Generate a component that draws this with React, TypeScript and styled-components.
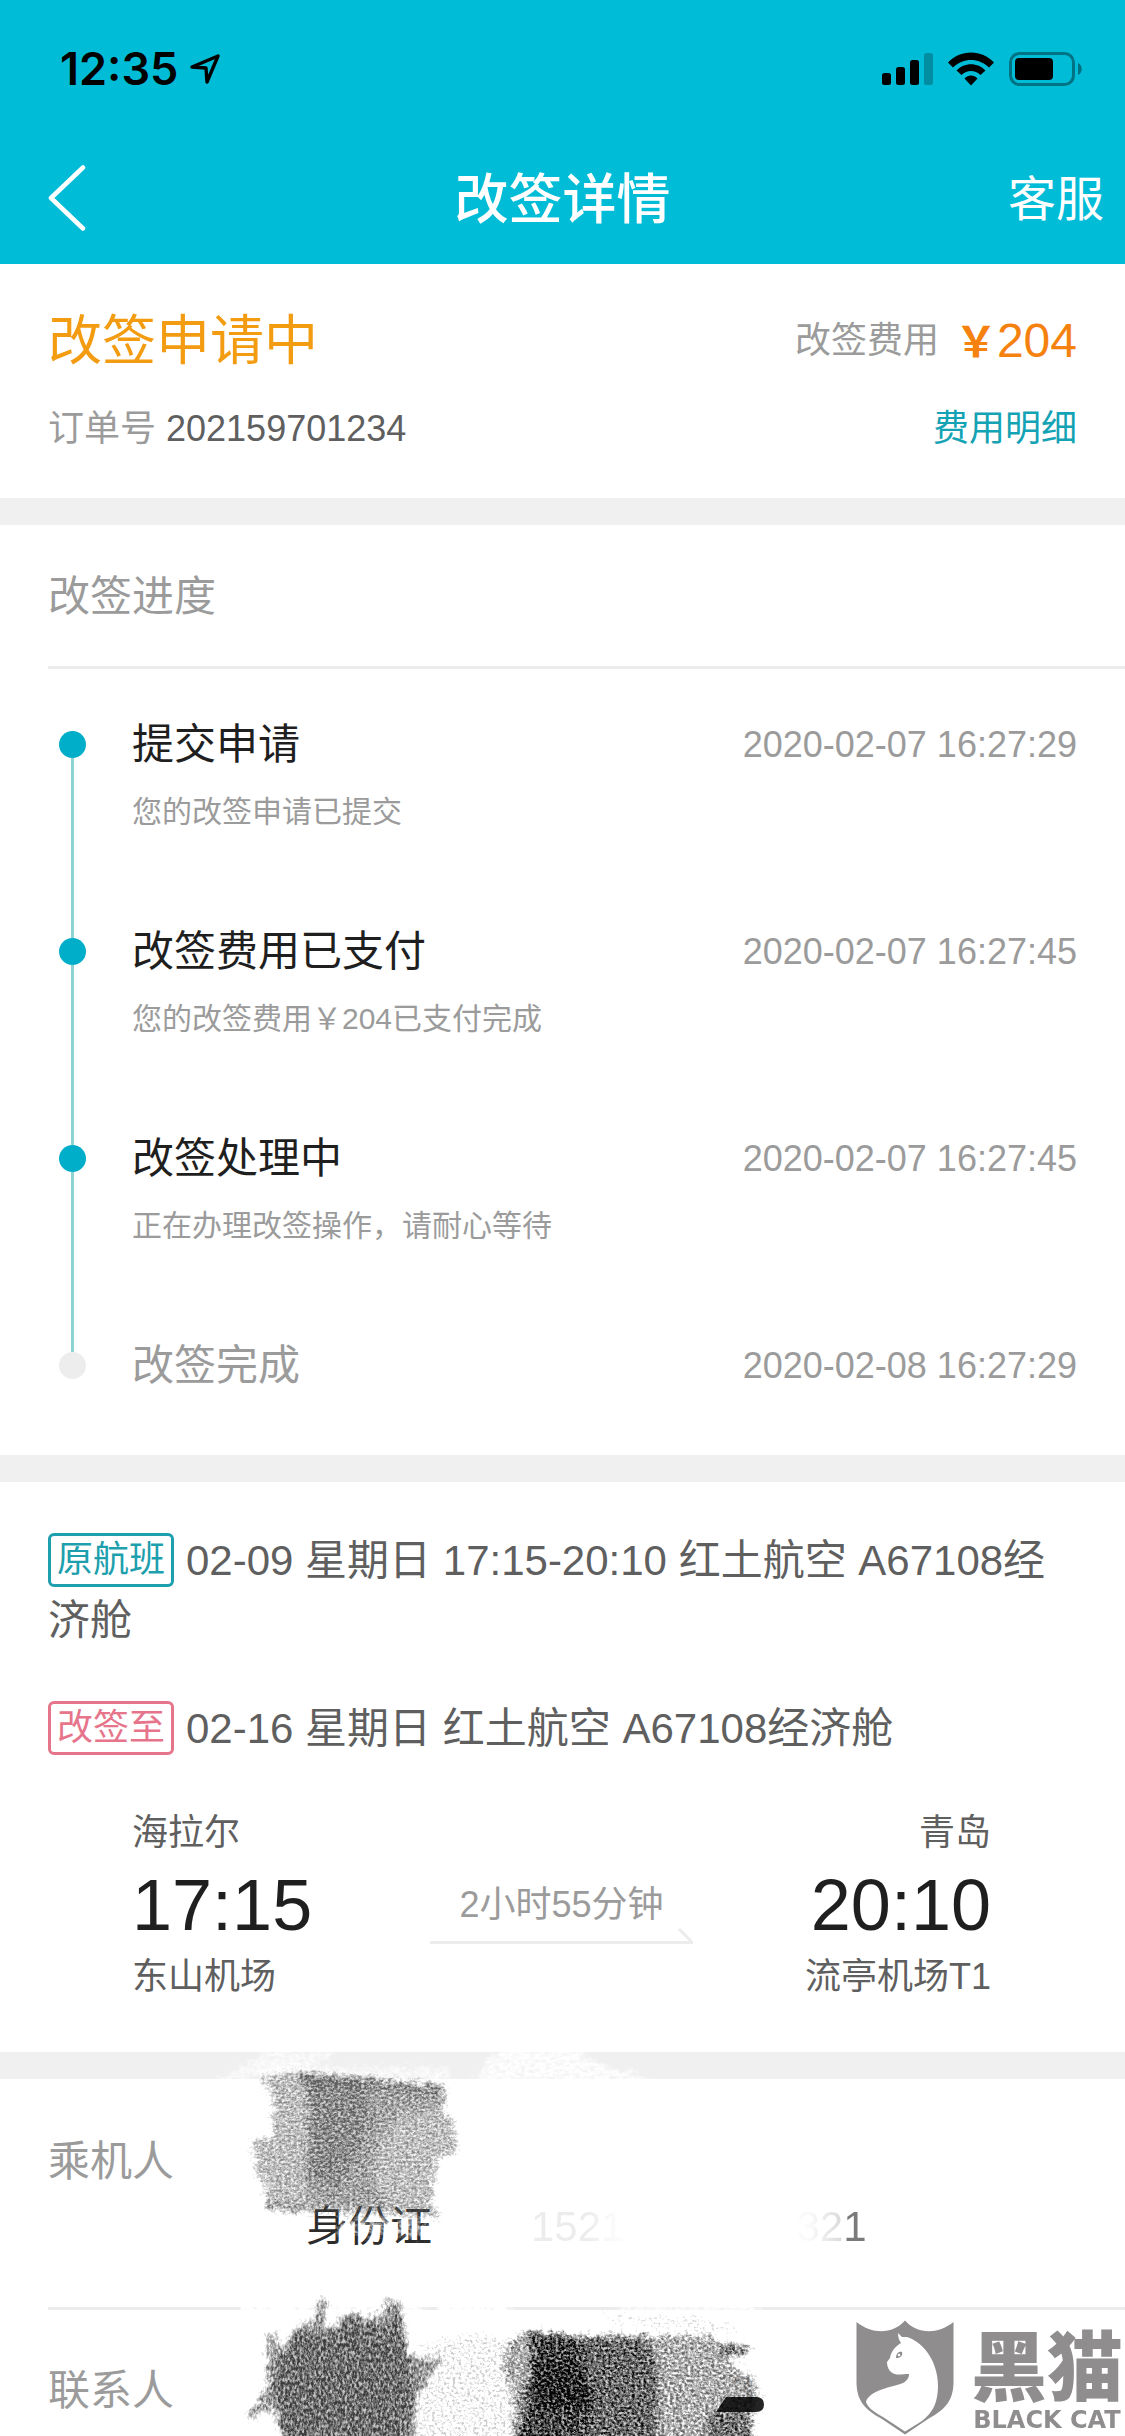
import React from "react";
import styled, { createGlobalStyle } from "styled-components";

const GlobalStyle = createGlobalStyle`
  *, *::before, *::after { box-sizing: border-box; }
  html, body { margin: 0; padding: 0; }
  body {
    background: #fff;
    color: #5f5f5f;
    font-family: "Liberation Sans", "Noto Sans CJK SC", sans-serif;
    font-size: 36px;
    line-height: 60px;
    overflow-x: hidden;
  }
  p, h1, h2, ol, dl, dd, dt { margin: 0; padding: 0; font: inherit; }
  button { border: 0; background: none; padding: 0; font: inherit; color: inherit; cursor: pointer; }
`;

const Page = styled.div`
  position: relative;
  display: flex;
  flex-direction: column;
  min-height: 100vh;
  overflow: hidden;
`;

const Header = styled.header`
  background: #00bcd7;
  color: #fff;
`;

const StatusBar = styled.div`
  display: flex;
  align-items: center;
  justify-content: space-between;
  height: 132px;
  padding: 6px 42px 0 60px;
  color: #000;
`;

const Clock = styled.div`
  display: flex;
  align-items: center;
  gap: 12px;
  font-family: Inter, sans-serif;
  font-size: 45px;
  font-weight: 600;
`;

const StatusIcons = styled.div`
  display: flex;
  align-items: center;
  gap: 15px;
`;

const NavBar = styled.nav`
  display: grid;
  grid-template-columns: 1fr auto 1fr;
  align-items: center;
  height: 132px;
`;

const BackButton = styled.button`
  display: flex;
  justify-self: start;
  margin-left: 48px;
`;

const NavTitle = styled.h1`
  padding-top: 4px;
  font-size: 54px;
  font-weight: 500;
`;

const ServiceButton = styled.button`
  justify-self: end;
  padding-top: 4px;
  margin-right: 21px;
  font-size: 48px;
`;

const Section = styled.section`
  border-bottom: 27px solid #f0f0f0;
`;

const Summary = styled(Section)`
  display: flex;
  flex-direction: column;
  gap: 28px;
  padding: 47px 48px 39px;
`;

const SummaryRow = styled.div`
  display: flex;
  align-items: center;
  justify-content: space-between;
`;

const StatusTitle = styled.h2`
  font-size: 54px;
  color: #f39c12;
`;

const Muted = styled.span`
  color: #9b9b9b;
`;

const Fee = styled.p`
  display: flex;
  align-items: center;
  gap: 16px;
`;

const Price = styled.strong`
  display: flex;
  align-items: baseline;
  height: 60px;
  font-size: 48px;
  font-weight: 400;
  color: #f5820f;
`;

const Yen = styled.span`
  font-size: 42px;
  font-weight: 700;
  line-height: 42px;
`;

const DetailLink = styled.a`
  color: #14a3b4;
  text-decoration: none;
`;

const SectionTitle = styled.h2`
  display: flex;
  align-items: center;
  min-height: 144px;
  margin-left: 48px;
  padding-top: 2px;
  border-bottom: 3px solid #ececec;
  font-size: 42px;
  color: #9b9b9b;
`;

const Steps = styled.ol`
  list-style: none;
  padding: 46px 48px 59px 59px;
`;

const Step = styled.li`
  display: grid;
  grid-template-columns: 27px 1fr auto;
  column-gap: 46px;
`;

const Marker = styled.div`
  display: flex;
  flex-direction: column;
  align-items: center;
  padding-top: 16px;
`;

const Dot = styled.i<{ $done: boolean }>`
  flex: none;
  width: 27px;
  height: 27px;
  border-radius: 50%;
  background: ${(p) => (p.$done ? "#00aec9" : "#ededed")};
`;

const Rail = styled.i`
  flex: 1;
  width: 3px;
  margin-bottom: -16px;
  background: #8dd3d3;
`;

const StepBody = styled.div<{ $last: boolean }>`
  padding-bottom: ${(p) => (p.$last ? "0" : "89px")};
`;

const StepTitle = styled.p<{ $done: boolean }>`
  font-size: 42px;
  color: ${(p) => (p.$done ? "#1f1f1f" : "#9b9b9b")};
`;

const StepNote = styled.p`
  margin-top: 16px;
  font-size: 30px;
  line-height: 42px;
  color: #9b9b9b;
`;

const StepTime = styled.time`
  color: #9b9b9b;
`;

const Flights = styled(Section)`
  padding: 49px 48px 39px;
`;

const FlightLine = styled.p`
  font-size: 42px;
  & + & { margin-top: 48px; }
`;

const Tag = styled.span<{ $color: string }>`
  float: left;
  margin: 2px 12px 0 0;
  padding: 0 6px;
  border: 3px solid ${(p) => p.$color};
  border-radius: 6px;
  font-size: 36px;
  line-height: 48px;
  color: ${(p) => p.$color};
`;

const Route = styled.div`
  display: flex;
  justify-content: space-between;
  padding: 38px 86px 0 84px;
  line-height: 72px;
`;

const Stop = styled.div<{ $end?: boolean }>`
  text-align: ${(p) => (p.$end ? "right" : "left")};
`;

const StopTime = styled.p`
  font-size: 72px;
  color: #1f1f1f;
`;

const Duration = styled.div`
  display: flex;
  flex-direction: column;
  align-items: center;
  gap: 4px;
  padding: 90px 0 0 6px;
  line-height: 36px;
  color: #9b9b9b;
`;

const People = styled.section`
  position: relative;
  flex: 1;
  font-size: 42px;
`;

const PersonRow = styled.dl`
  display: grid;
  grid-template-columns: 258px 225px 1fr;
  row-gap: 5px;
`;

const PassengerRow = styled(PersonRow)`
  margin-left: 48px;
  padding: 53px 0 50px;
  border-bottom: 3px solid #ececec;
`;

const ContactRow = styled(PersonRow)`
  padding: 51px 48px 15px;
`;

const Label = styled.dt`
  color: #9b9b9b;
`;

const IdType = styled.dd`
  grid-column: 2;
  color: #2c2c2c;
`;

const IdNumber = styled.dd`
  display: flex;
  gap: 172px;
`;

const FadingOut = styled.span`
  background: linear-gradient(90deg, #ececec 60%, #fbfbfb 90%);
  background-clip: text;
  color: transparent;
`;

const FadingIn = styled.span`
  background: linear-gradient(90deg, #fafafa 20%, #dcdcdc 62%, #7a7a7a 72%);
  background-clip: text;
  color: transparent;
`;

const ContactNumber = styled.dd`
  grid-column: 3;
  padding-left: 200px;
  color: #d0d0d0;
`;

const Scribbles = styled.svg`
  position: absolute;
  top: -39px;
  left: 200px;
  pointer-events: none;
`;

const Watermark = styled.div`
  position: absolute;
  right: 2px;
  bottom: 0;
  display: flex;
  align-items: flex-end;
  gap: 17px;
  color: #8f8d8e;
`;

const WatermarkText = styled.div`
  display: flex;
  flex-direction: column;
  align-items: center;
  font-weight: 900;
`;

const WatermarkName = styled.span`
  font-family: "Noto Sans CJK SC", sans-serif;
  font-size: 76px;
  line-height: 84px;
`;

const WatermarkLatin = styled.span`
  font-family: "DejaVu Sans", sans-serif;
  font-weight: 700;
  font-size: 24px;
  line-height: 32px;
  white-space: nowrap;
`;

const steps = [
  { title: "提交申请", note: "您的改签申请已提交", time: "2020-02-07 16:27:29", done: true },
  { title: "改签费用已支付", note: "您的改签费用￥204已支付完成", time: "2020-02-07 16:27:45", done: true },
  { title: "改签处理中", note: "正在办理改签操作，请耐心等待", time: "2020-02-07 16:27:45", done: true },
  { title: "改签完成", note: "", time: "2020-02-08 16:27:29", done: false },
];

function LocationIcon() {
  return (
    <svg width="30" height="32" viewBox="0 0 30 32" fill="none" stroke="#000" strokeWidth="3.4" strokeLinejoin="round">
      <path d="M2 14 L28 3 L17 29 L16 15 Z" />
    </svg>
  );
}

function SignalIcon() {
  return (
    <svg width="51" height="34" viewBox="0 0 51 34">
      <rect x="0" y="21" width="9" height="12" rx="2.5" />
      <rect x="14" y="15" width="9" height="18" rx="2.5" />
      <rect x="28" y="8" width="9" height="25" rx="2.5" />
      <rect x="42" y="1" width="9" height="32" rx="2.5" opacity=".25" />
    </svg>
  );
}

function WifiIcon() {
  return (
    <svg width="46" height="34" viewBox="0 0 46 34">
      <path d="M0 10.500 C12 -3 34 -3 46 10.500 L41 15.500 C31 5.500 15 5.500 5 15.500 Z" />
      <path d="M8.500 18.500 C16 10 30 10 37.500 18.500 L32.500 23 C27 17.500 19 17.500 13.500 23 Z" />
      <path d="M16.500 26.500 C20 22.500 26 22.500 29.500 26.500 L23 33.500 Z" />
    </svg>
  );
}

function BatteryIcon() {
  return (
    <svg width="74" height="34" viewBox="0 0 74 34">
      <rect x="1.500" y="1.500" width="63" height="31" rx="9" fill="none" stroke="#000" strokeOpacity=".38" strokeWidth="3" />
      <rect x="6" y="6" width="38" height="22" rx="4" />
      <path d="M69 11 C74 13 74 21 69 23 Z" opacity=".4" />
    </svg>
  );
}

function BackIcon() {
  return (
    <svg width="40" height="66" viewBox="0 0 40 66" fill="none" stroke="#fff" strokeWidth="4.500" strokeLinecap="round" strokeLinejoin="round">
      <path d="M35 2.500 L3 33 L35 63.500" />
    </svg>
  );
}

function RouteArrow() {
  return (
    <svg width="264" height="17" viewBox="0 0 264 17" fill="none" stroke="#ececec" strokeWidth="3">
      <path d="M0 15.500 H263 M249 2 L261 14" />
    </svg>
  );
}

function Grain({ id, color, freq, seed }: { id: string; color: string; freq: string; seed: number }) {
  return (
    <filter id={id} filterUnits="userSpaceOnUse" x="0" y="0" width="700" height="420" colorInterpolationFilters="sRGB">
      <feTurbulence type="fractalNoise" baseFrequency={freq} numOctaves={4} seed={seed} result="t" />
      <feColorMatrix in="t" type="matrix" values="0 0 0 0 0  0 0 0 0 0  0 0 0 0 0  1.5 1.5 0 0 -1" result="n" />
      <feTurbulence type="fractalNoise" baseFrequency="0.12" numOctaves={2} seed={seed + 1} result="w" />
      <feGaussianBlur in="SourceGraphic" stdDeviation="3" result="b" />
      <feDisplacementMap in="b" in2="w" scale="12" xChannelSelector="R" yChannelSelector="G" result="s" />
      <feComposite in="s" in2="n" operator="arithmetic" k1="0.7" k2="0.75" k3="0.3" k4="-0.3" result="m" />
      <feFlood floodColor={color} />
      <feComposite in2="m" operator="in" result="c" />
      <feGaussianBlur in="c" stdDeviation="0.6" />
    </filter>
  );
}

function PassengerScribbles() {
  return (
    <Scribbles width="700" height="396" viewBox="0 0 700 396" aria-hidden="true">
      <defs>
        <Grain id="chalk" color="#ffffff" freq="0.2 0.3" seed={4} />
        <Grain id="pencil" color="#606060" freq="0.34 0.42" seed={11} />
        <Grain id="crayon" color="#3c3c3c" freq="0.42 0.26" seed={7} />
        <Grain id="charcoal" color="#050505" freq="0.34 0.4" seed={23} />
      </defs>

      <g filter="url(#chalk)">
        <path d="M10 42 L70 10 H140 L115 26 L40 42 Z" opacity=".6" />
        <path d="M270 42 L300 8 H372 L400 24 L465 42 Z" opacity=".8" />
        <path d="M62 26 H250 V42 H62 Z" opacity=".6" />
        <path d="M138 178 H232 V196 H138 Z" opacity=".55" />
        <path d="M40 260 H225 V277 H40 Z M238 260 H310 V277 H238 Z" />
        <path d="M420 260 H560 V277 H420 Z" opacity=".7" />
      </g>

      <g filter="url(#pencil)">
        <path d="M63 35 L100 32 L245 45 L243 70 L253 78 L257 113 L237 117 L233 165 L242 178 L140 174 L65 170 L65 142 L57 137 L51 100 L72 97 L72 58 L63 43 Z" opacity=".5" />
        <path d="M100 32 L163 37 L245 47 L244 66 L200 74 L180 100 L172 140 L190 168 L110 166 L104 130 L108 65 Z" opacity=".3" />
        <path d="M100 32 L163 37 L170 70 L157 115 L137 148 L110 138 L112 65 Z" opacity=".4" />
        <path d="M100 32 L245 46 L245 53 L150 48 L104 45 Z M66 163 L110 166 V172 L66 170 Z" opacity=".5" />
      </g>
    </Scribbles>
  );
}

function ContactScribbles() {
  return (
    <Scribbles width="700" height="396" viewBox="0 0 700 396" aria-hidden="true">
      <g filter="url(#charcoal)">
        <path d="M208 306 L280 293 L306 298 L318 410 L216 410 L218 357 L241 325 L234 314 Z" opacity=".14" />
        <path d="M398 274 L505 278 L541 288 L538 294 L410 283 Z" opacity=".12" />
        <path d="M328 290 L369 295 L508 295 L519 302 L555 307 L544 315 L526 320 L553 337 L560 357 L553 383 L556 410 L314 410 L312 353 L303 327 L308 300 Z" opacity=".42" />
        <path d="M328 290 L369 296 L448 297 L458 330 L456 410 L316 410 L324 350 L334 318 Z" opacity=".45" />
        <path d="M332 292 L380 298 L387 340 L392 368 L380 410 L316 410 L330 370 Z" opacity=".4" />
        <path d="M334 320 L376 322 L392 352 L388 368 L336 372 Z" opacity=".6" />
        <path d="M506 410 L510 372 L550 372 L556 410 Z M518 302 L553 307 L546 314 L520 314 Z" opacity=".4" />
      </g>
      <path d="M526 357 H556 Q564 357 564 364.500 Q564 372 556 372 H516 Z" opacity=".85" />
      <g filter="url(#crayon)">
        <path d="M67 292 L75 292 L78 312 L89 302 L98 285 L112 282 L119 258 L129 260 L124 283 L128 293 L144 273 L160 272 L164 293 L171 275 L182 275 L186 260 L201 262 L207 313 L225 318 L241 315 L241 325 L217 357 L216 410 L84 410 L73 367 L51 380 L46 377 L66 350 L67 323 Z" opacity=".6" />
        <path d="M98 290 L125 294 L160 276 L186 290 L200 266 L207 320 L214 345 L204 410 L86 410 L74 345 L80 315 Z" opacity=".5" />
      </g>
    </Scribbles>
  );
}

function ShieldLogo() {
  return (
    <svg width="98" height="116" viewBox="0 0 98 116">
      <path fill="#8f8d8e" d="M0.500 2 C17 15 37 14 49 0.500 C61 14 81 15 97.500 2 V63 C97 82 88 90 72 99 L49 114.500 L26 99 C10 90 1 82 0.500 63 Z" />
      <path fill="#fff" d="M42 13 L46 17 L51 17 C70 23 82 45 82 65 C82 84 76 93 66 101 L49 111.500 L27 97 C17 92 11 86 10 82 C13 70 37 67 47 63 C52 60 53 57 53 54 C45 54 40 56 35 52 C31 48 31 43 31 42 L34 38 C35 31 40 26 45 23 C43 20 42 17 42 13 Z" />
      <path fill="#8f8d8e" d="M40 38 C40 33 43 31 46 32 C47 36 44 38 40 38 Z" />
      <circle cx="43" cy="35" r="1.300" fill="#fff" />
    </svg>
  );
}

export default function App() {
  return (
    <Page>
      <GlobalStyle />
      <Header>
        <StatusBar>
          <Clock>
            12:35
            <LocationIcon />
          </Clock>
          <StatusIcons>
            <SignalIcon />
            <WifiIcon />
            <BatteryIcon />
          </StatusIcons>
        </StatusBar>
        <NavBar>
          <BackButton type="button" aria-label="返回">
            <BackIcon />
          </BackButton>
          <NavTitle>改签详情</NavTitle>
          <ServiceButton type="button">客服</ServiceButton>
        </NavBar>
      </Header>

      <Summary>
        <SummaryRow>
          <StatusTitle>改签申请中</StatusTitle>
          <Fee>
            <Muted>改签费用</Muted>
            <Price>
              <Yen>￥</Yen>204
            </Price>
          </Fee>
        </SummaryRow>
        <SummaryRow>
          <p>
            <Muted>订单号</Muted> 202159701234
          </p>
          <DetailLink href="#fee">费用明细</DetailLink>
        </SummaryRow>
      </Summary>

      <Section>
        <SectionTitle>改签进度</SectionTitle>
        <Steps>
          {steps.map((step, i) => {
            const last = i === steps.length - 1;
            return (
              <Step key={step.title}>
                <Marker>
                  <Dot $done={step.done} />
                  {!last && <Rail />}
                </Marker>
                <StepBody $last={last}>
                  <StepTitle $done={step.done}>{step.title}</StepTitle>
                  {step.note && <StepNote>{step.note}</StepNote>}
                </StepBody>
                <StepTime>{step.time}</StepTime>
              </Step>
            );
          })}
        </Steps>
      </Section>

      <Flights>
        <FlightLine>
          <Tag $color="#1d9fae">原航班</Tag>
          02-09 星期日 17:15-20:10 红土航空 A67108经济舱
        </FlightLine>
        <FlightLine>
          <Tag $color="#e6748b">改签至</Tag>
          02-16 星期日 红土航空 A67108经济舱
        </FlightLine>
        <Route>
          <Stop>
            <p>海拉尔</p>
            <StopTime>17:15</StopTime>
            <p>东山机场</p>
          </Stop>
          <Duration>
            <span>2小时55分钟</span>
            <RouteArrow />
          </Duration>
          <Stop $end>
            <p>青岛</p>
            <StopTime>20:10</StopTime>
            <p>流亭机场T1</p>
          </Stop>
        </Route>
      </Flights>

      <People>
        <PassengerRow>
          <Label>乘机人</Label>
          <IdType />
          <IdNumber />
          <IdType>身份证</IdType>
          <IdNumber>
            <FadingOut>1521</FadingOut>
            <FadingIn>321</FadingIn>
          </IdNumber>
        </PassengerRow>
        <ContactRow>
          <Label>联系人</Label>
          <ContactNumber>3</ContactNumber>
        </ContactRow>
        <PassengerScribbles />
        <ContactScribbles />
      </People>

      <Watermark>
        <ShieldLogo />
        <WatermarkText>
          <WatermarkName>黑猫</WatermarkName>
          <WatermarkLatin>BLACK CAT</WatermarkLatin>
        </WatermarkText>
      </Watermark>
    </Page>
  );
}
